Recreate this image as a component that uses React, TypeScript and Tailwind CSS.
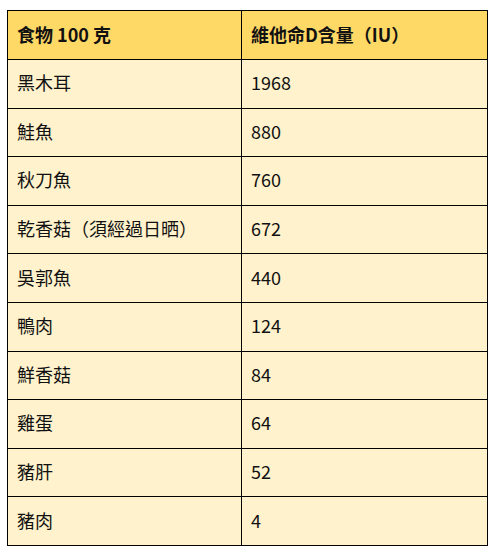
const ROWS: [string, string][] = [
  ["黑木耳", "1968"],
  ["鮭魚", "880"],
  ["秋刀魚", "760"],
  ["乾香菇（須經過日晒）", "672"],
  ["吳郭魚", "440"],
  ["鴨肉", "124"],
  ["鮮香菇", "84"],
  ["雞蛋", "64"],
  ["豬肝", "52"],
  ["豬肉", "4"],
]

export default function App() {
  return (
    <div className="w-[495px] h-[553px] bg-white pt-[10px] pl-[7px] font-['Noto_Sans_CJK_TC',sans-serif] text-[#111]">
      <table className="w-[481px] border-collapse table-fixed">
        <colgroup>
          <col className="w-[234px]" />
          <col />
        </colgroup>
        <thead>
          <tr className="h-[49px] bg-[#ffd966]">
            <th className="border border-black px-[9px] pb-[2px] text-left text-[18px] font-bold">食物 100 克</th>
            <th className="border border-black px-[9px] pb-[2px] text-left text-[18px] font-bold">維他命D含量（IU）</th>
          </tr>
        </thead>
        <tbody>
          {ROWS.map(([food, iu]) => (
            <tr key={food} className="h-[48.6px] bg-[#fff2cc]">
              <td className="border border-black px-[9px] pb-[2px] text-[18px]">{food}</td>
              <td className="border border-black px-[9px] pb-[2px] text-[18px]">{iu}</td>
            </tr>
          ))}
        </tbody>
      </table>
    </div>
  )
}
